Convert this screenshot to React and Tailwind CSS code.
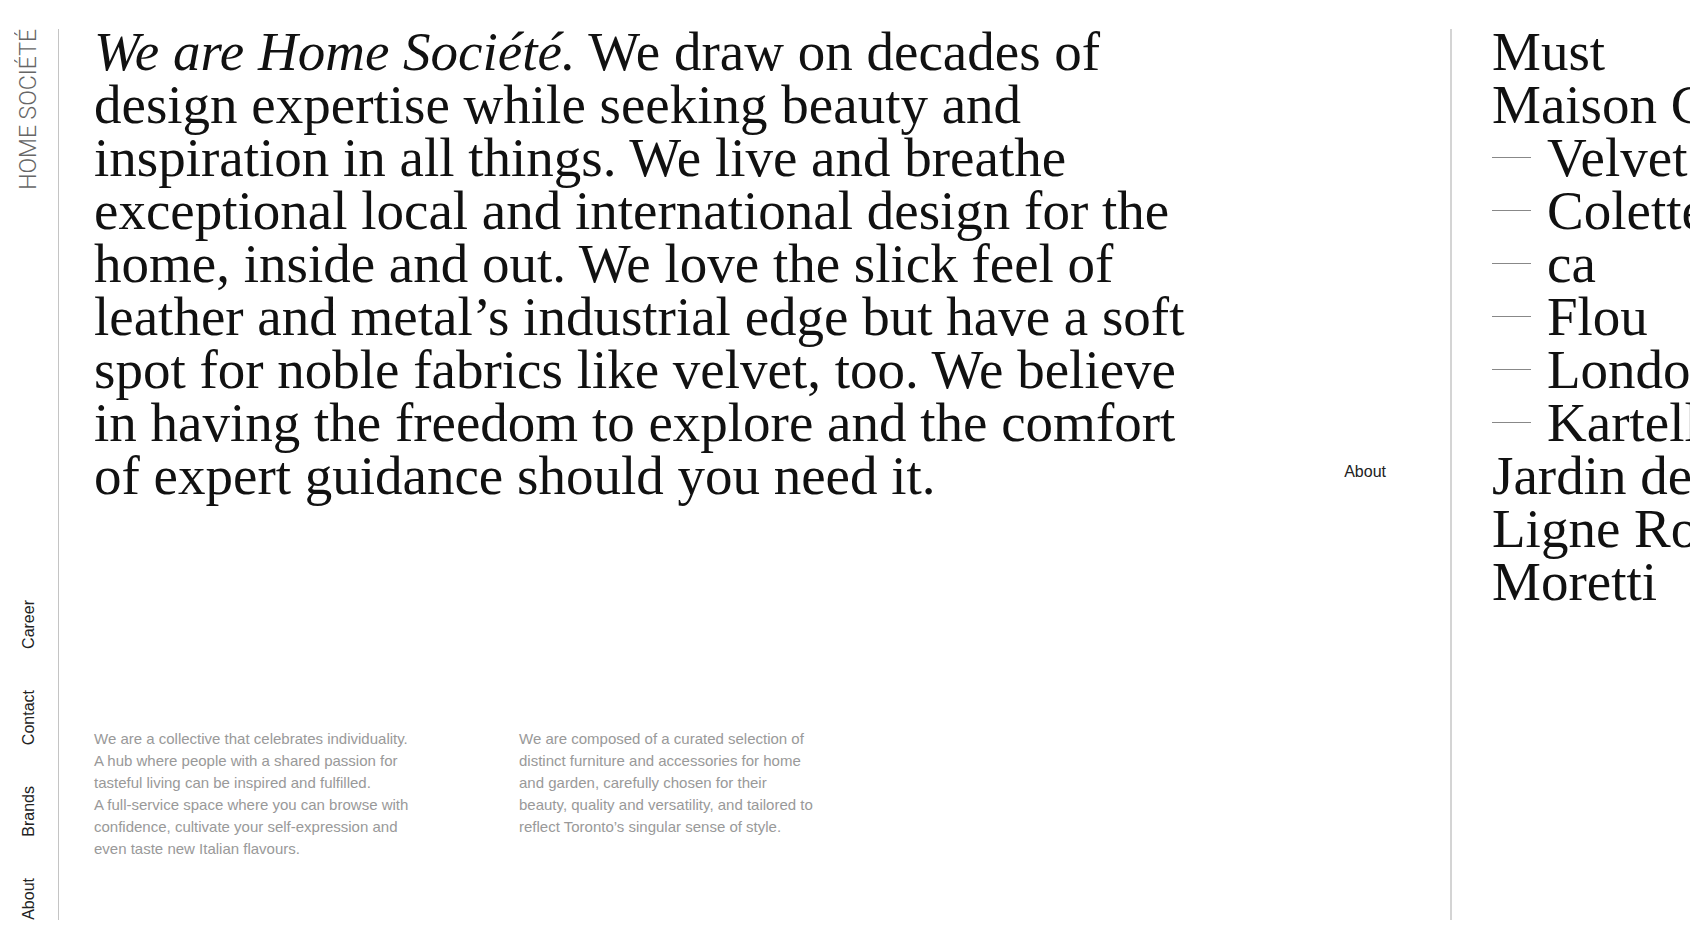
const introLines = [
  "design expertise while seeking beauty and",
  "inspiration in all things. We live and breathe",
  "exceptional local and international design for the",
  "home, inside and out. We love the slick feel of",
  "leather and metal’s industrial edge but have a soft",
  "spot for noble fabrics like velvet, too. We believe",
  "in having the freedom to explore and the comfort",
  "of expert guidance should you need it.",
];

const notes = [
  [
    "We are a collective that celebrates individuality.",
    "A hub where people with a shared passion for",
    "tasteful living can be inspired and fulfilled.",
    "A full-service space where you can browse with",
    "confidence, cultivate your self-expression and",
    "even taste new Italian flavours.",
  ],
  [
    "We are composed of a curated selection of",
    "distinct furniture and accessories for home",
    "and garden, carefully chosen for their",
    "beauty, quality and versatility, and tailored to",
    "reflect Toronto’s singular sense of style.",
  ],
];

const brands = [
  { name: "Must" },
  { name: "Maison Corbeil" },
  { name: "Velvet", sub: true },
  { name: "Colette", sub: true },
  { name: "ca", sub: true },
  { name: "Flou", sub: true },
  { name: "Londonart", sub: true },
  { name: "Kartell", sub: true },
  { name: "Jardin de Ville" },
  { name: "Ligne Roset" },
  { name: "Moretti" },
];

const links = ["Career", "Contact", "Brands", "About"];

function Sidebar() {
  return (
    <header className="flex w-[59px] shrink-0 flex-col items-center justify-between border-r border-[#c4c4c4]">
      <a
        href="#home"
        className="rotate-180 whitespace-nowrap font-['Roboto','Liberation_Sans',sans-serif] text-[23px] leading-6 font-light text-[#666] [writing-mode:vertical-rl]"
      >
        HOME SOCIÉTÉ
      </a>
      <nav className="flex flex-col items-center gap-[41px] text-[16px] leading-5 text-[#222]">
        {links.map((link) => (
          <a key={link} href={`#${link.toLowerCase()}`} className="rotate-180 [writing-mode:vertical-rl]">
            {link}
          </a>
        ))}
      </nav>
    </header>
  );
}

export default function App() {
  return (
    <div className="flex min-h-screen overflow-hidden bg-white pt-[29px] pb-[30px] font-['Liberation_Sans',Arial,sans-serif]">
      <Sidebar />
      <main className="flex min-w-0 grow">
        <section id="about" className="flex grow flex-col justify-between pr-16 pb-[60px] pl-[35px]">
          <div className="-mt-1 flex items-end justify-between">
            <h1 className="font-['Liberation_Serif',serif] text-[55px] leading-[53px] whitespace-nowrap text-[#111]">
              <span className="block">
                <em>We are Home Société.</em> We draw on decades of
              </span>
              {introLines.map((line) => (
                <span key={line} className="block">
                  {line}
                </span>
              ))}
            </h1>
            <h2 className="pb-5 text-[16px] leading-5 text-[#222]">About</h2>
          </div>
          <div className="grid grid-cols-[425px_1fr] text-[15px] leading-[22px] whitespace-nowrap text-[#999]">
            {notes.map((lines) => (
              <p key={lines[0]}>
                {lines.map((line) => (
                  <span key={line} className="block">
                    {line}
                  </span>
                ))}
              </p>
            ))}
          </div>
        </section>
        <section id="brands" className="w-60 shrink-0 border-l-2 border-[#d4d4d4] pl-10">
          <ul className="-mt-1 font-['Liberation_Serif',serif] text-[55px] leading-[53px] whitespace-nowrap text-[#111]">
            {brands.map(({ name, sub }) => (
              <li key={name} className="flex items-center gap-4">
                {sub && <span className="w-[39px] shrink-0 border-t border-[#888]" />}
                {name}
              </li>
            ))}
          </ul>
        </section>
      </main>
    </div>
  );
}
